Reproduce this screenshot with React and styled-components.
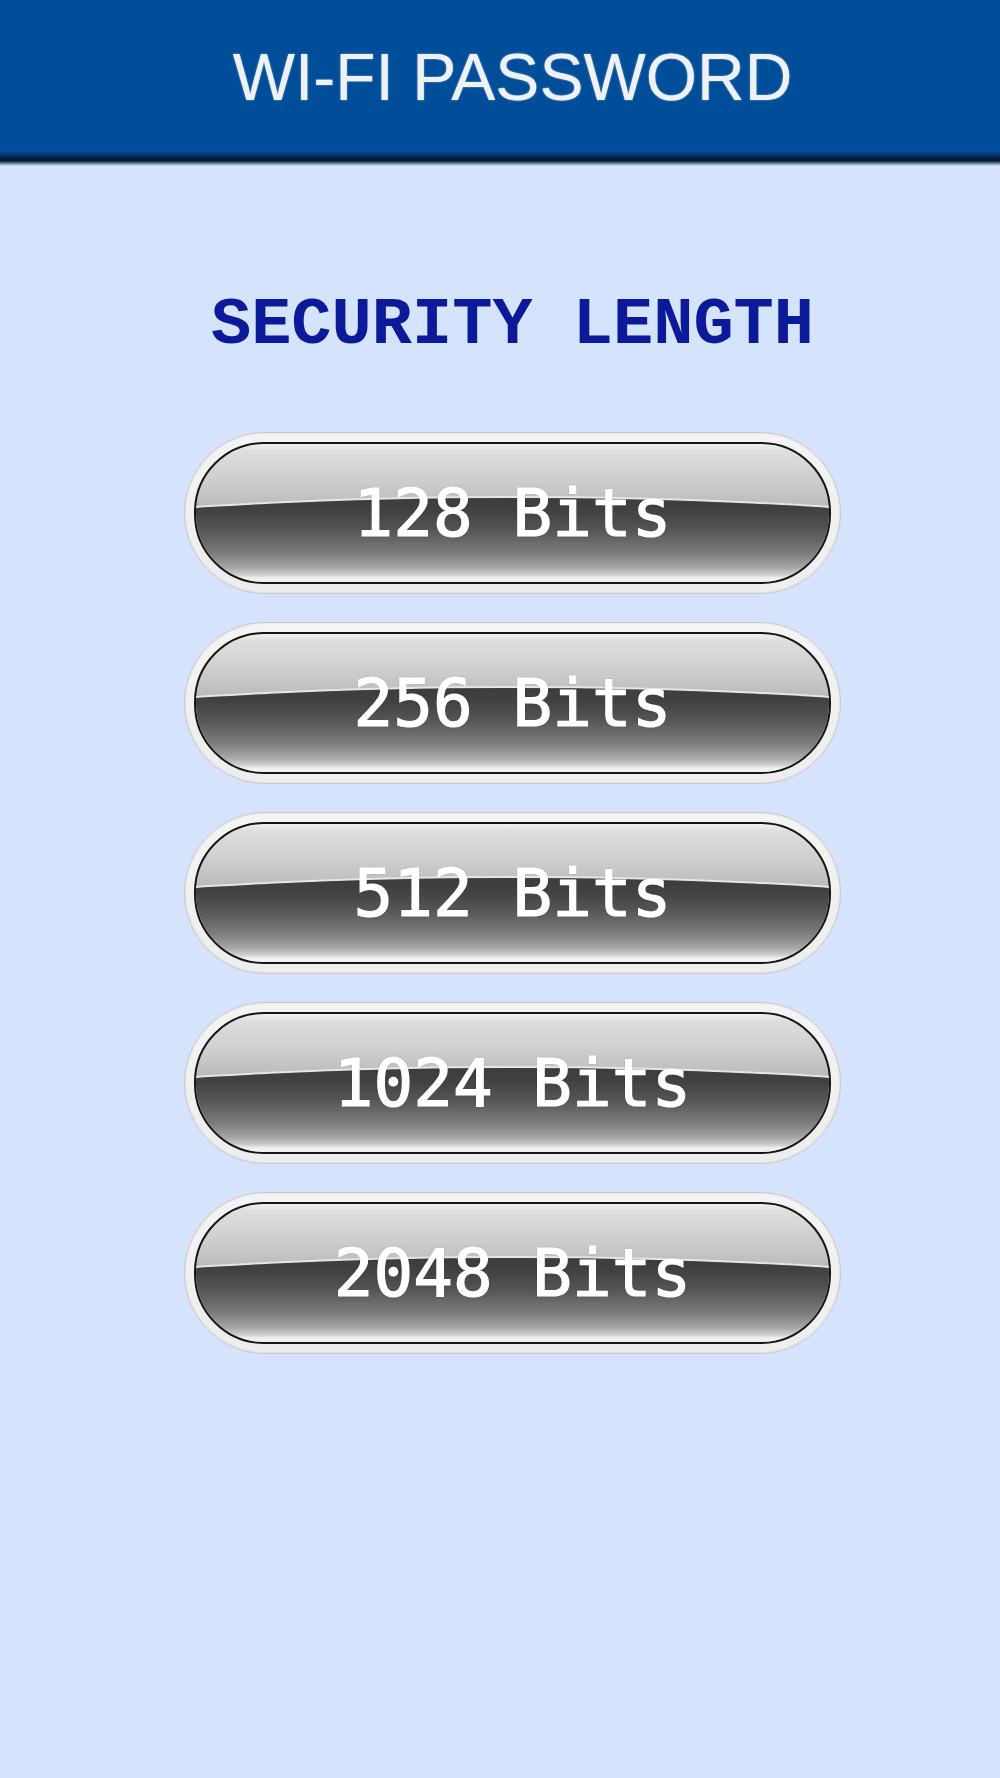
import React from "react";
import styled, { createGlobalStyle } from "styled-components";

const GlobalStyle = createGlobalStyle`
  html, body {
    margin: 0;
    padding: 0;
    background: #d5e3fd;
  }
  #root {
    min-height: 1778px;
    background: #d5e3fd;
  }
`;

const Page = styled.div`
  display: flex;
  flex-direction: column;
  min-height: 1778px;
`;

const Header = styled.header`
  height: 166px;
  display: flex;
  justify-content: center;
  padding: 37px 0 0 25px;
  box-sizing: border-box;
  background: linear-gradient(
    to bottom,
    #004d99 0,
    #004d99 151px,
    #00366c 155px,
    #061a33 159px,
    #0d1a2a 161px,
    #7e9cc6 164px,
    #d5e3fd 166px
  );
`;

const HeaderTitle = styled.h1`
  margin: 0;
  font-family: "Liberation Sans", Arial, sans-serif;
  font-weight: 400;
  font-size: 66px;
  line-height: 80px;
  color: #eef2f7;
  text-shadow: 0 0 2px rgba(255, 255, 255, 0.6);
`;

const Main = styled.main`
  display: flex;
  flex-direction: column;
  align-items: center;
  padding-left: 25px;
`;

const SectionTitle = styled.h2`
  margin: 119px 0 0;
  font-family: "Liberation Mono", "Courier New", monospace;
  font-weight: 700;
  font-size: 67px;
  line-height: 80px;
  color: #0b1a99;
`;

const List = styled.div`
  margin-top: 67px;
  display: flex;
  flex-direction: column;
  gap: 28px;
`;

const Pill = styled.button`
  width: 657px;
  height: 162px;
  padding: 9px;
  box-sizing: border-box;
  border: 1px solid #c9c9c9;
  border-radius: 81px;
  background: linear-gradient(to bottom, #f4f4f4, #ededed);
  box-shadow: inset 0 0 2px rgba(0, 0, 0, 0.12);
  cursor: pointer;
  display: flex;
`;

/* light upper half, the dark glossy lower half is an ellipse on top of it */
const Face = styled.span`
  position: relative;
  flex: 1;
  display: flex;
  align-items: center;
  justify-content: center;
  border: 2px solid #151515;
  border-radius: 70px;
  overflow: hidden;
  background: linear-gradient(
    to bottom,
    #f0f0f0 0,
    #dedede 5%,
    #cfcfcf 25%,
    #c0c0c0 40%,
    #b4b4b4 50%
  );

  &::before {
    content: "";
    position: absolute;
    left: -50%;
    width: 200%;
    top: 54px;
    height: 150px;
    border-radius: 50%;
    box-shadow: 0 -2px 0 #e6e6e6;
    background: linear-gradient(
      to bottom,
      #3c3c3c 0,
      #424242 14px,
      #555555 32px,
      #7e7e7e 56px,
      #a8a8a8 70px,
      #d0d0d0 77px,
      #f0f0f0 80px,
      #f0f0f0 100%
    );
  }
`;

const Label = styled.span`
  position: relative;
  top: 1px;
  font-family: "DejaVu Sans Mono", "Liberation Mono", monospace;
  font-weight: 400;
  font-size: 66px;
  line-height: 1;
  color: #ffffff;
  -webkit-text-stroke: 1.2px #ffffff;
  text-shadow: 0 0 2px rgba(0, 0, 0, 0.3);
  white-space: pre;
`;

const sizes = ["128", "256", "512", "1024", "2048"];

export default function App() {
  return (
    <>
      <GlobalStyle />
      <Page>
        <Header>
          <HeaderTitle>WI-FI PASSWORD</HeaderTitle>
        </Header>
        <Main>
          <SectionTitle>SECURITY LENGTH</SectionTitle>
          <List>
            {sizes.map((s) => (
              <Pill key={s}>
                <Face>
                  <Label>{s} Bits</Label>
                </Face>
              </Pill>
            ))}
          </List>
        </Main>
      </Page>
    </>
  );
}
